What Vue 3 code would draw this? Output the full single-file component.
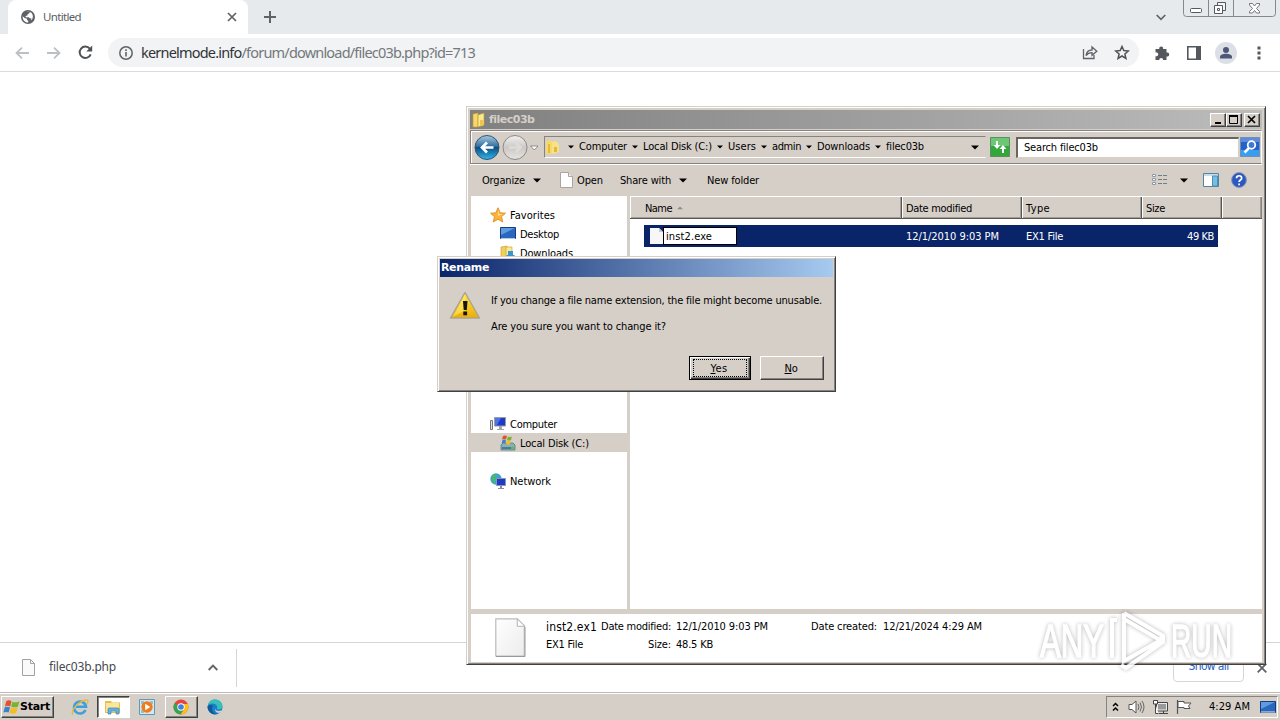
<template>
  <div class="screen">
    <!-- browser -->
    <div class="browser">
      <div class="tabstrip">
        <div class="tab">
          <svg class="globe" width="14" height="14" viewBox="0 0 14 14">
            <circle cx="7" cy="7" r="7" fill="#5f6368" />
            <path d="M1.6 6.2 4 8.2l1.8.4.4 1.6 1 .4v1.9C4 12.600 1.500 10 1.600 6.200zM6 2h2.800l-.6 1.500L6.700 4l-.2 1.500-2 .5.3 1.200h3l1 1 1.700.3L9.800 10.600C12.800 8.500 12.500 4.200 9.600 2.300 8.400 1.600 7 1.500 6 2z" fill="#fff" />
          </svg>
          <span v-fit="38" class="tab-title">Untitled</span>
          <svg class="tab-x" width="10" height="10" viewBox="0 0 10 10"><path d="M1 1l8 8M9 1L1 9" stroke="#5f6368" stroke-width="1.700" /></svg>
        </div>
        <svg class="tab-plus" width="12" height="12" viewBox="0 0 12 12"><path d="M6 0v12M0 6h12" stroke="#5f6368" stroke-width="2" /></svg>
        <svg class="tab-search" width="10" height="7" viewBox="0 0 10 7"><path d="M.7 1L5 5.400 9.300 1" fill="none" stroke="#5f6368" stroke-width="1.700" /></svg>
        <svg class="frame-buttons" width="94" height="17" viewBox="0 0 94 17">
          <path d="M.5 0v13.500q0 3 3 3h86q3 0 3-3V0M25.500 0v16.500M50.500 0v16.500" fill="none" stroke="#85888c" />
          <rect x="7.500" y="8.500" width="11" height="4" rx="1" fill="#fff" stroke="#55595f" />
          <path d="M34.500 2.500h8v8h-8z" fill="#f4f5f6" stroke="#55595f" />
          <path d="M31.500 5.500h8v8h-8z" fill="#fff" stroke="#55595f" /><path d="M34.500 8.500h2v2h-2z" fill="none" stroke="#55595f" />
          <path d="M66.500 3.500h3l2 2.500 2-2.500h3v1.500l-3 3.500 3 3v1.500h-3l-2-2.500-2 2.500h-3v-1.500l3-3-3-3.500z" fill="#fff" stroke="#66696e" stroke-width=".9" />
        </svg>
      </div>

      <div class="toolbar">
        <svg class="nav-back" width="14" height="12" viewBox="0 0 14 12"><path d="M14 6H1.500M7 .7L1.500 6 7 11.300" fill="none" stroke="#bdc0c3" stroke-width="1.800" /></svg>
        <svg class="nav-fwd" width="14" height="12" viewBox="0 0 14 12"><path d="M0 6h12.500M7 .7L12.500 6 7 11.300" fill="none" stroke="#bdc0c3" stroke-width="1.800" /></svg>
        <svg class="nav-reload" width="15" height="15" viewBox="0 0 15 15"><path d="M12.700 9.300A5.700 5.700 0 1 1 11.800 3.700L13 5" fill="none" stroke="#4f5357" stroke-width="2" /><path d="M14.200.5v6H8.300z" fill="#4f5357" /></svg>
        <div class="omnibox">
          <svg width="14" height="14" viewBox="0 0 14 14"><circle cx="7" cy="7" r="6.200" fill="none" stroke="#5f6368" stroke-width="1.500" /><path d="M7 6v4.500M7 3.300V5" stroke="#5f6368" stroke-width="1.600" /></svg>
          <span v-fit="334" class="url"><b>kernelmode.info</b>/forum/download/filec03b.php?id=713</span>
          <svg class="share" width="16" height="15" viewBox="0 0 16 15"><path d="M1.500 4v9.500H12V10M4 10.500C4.500 7 6.500 5 10 5V2l4.800 4.200L10 10.300V7.600C7.500 7.600 5.500 8.500 4 10.500z" fill="none" stroke="#5f6368" stroke-width="1.300" /></svg>
          <svg width="16" height="15" viewBox="0 0 16 15"><path d="M8 1.500l1.800 4.100 4.500.4-3.400 3 1 4.400L8 11l-3.900 2.400 1-4.400-3.400-3 4.500-.4z" fill="none" stroke="#4f5357" stroke-width="1.500" /></svg>
        </div>
        <svg class="puzzle" width="16" height="16" viewBox="0 0 16 16"><path d="M1.500 4h3.800a2 2 0 1 1 3.800 0H12.500v3.500a2.100 2.100 0 1 1 0 4V15H9.200a2 2 0 1 0-4 0H1.500v-3.800a2 2 0 1 0 0-3.700z" fill="#54585c" /></svg>
        <svg class="panel" width="14" height="14" viewBox="0 0 14 14"><path d="M.8.800h12.400v12.400H.800z" fill="#fff" stroke="#54585c" stroke-width="1.600" /><path d="M9 0h5v14H9z" fill="#54585c" /></svg>
        <svg class="avatar" width="22" height="22" viewBox="0 0 22 22"><circle cx="11" cy="11" r="11" fill="#dcdfe5" /><circle cx="11" cy="8" r="3" fill="#4d5878" /><path d="M5 16.500V15c0-2 3-3.200 6-3.200s6 1.200 6 3.200v1.500z" fill="#4d5878" /></svg>
        <svg class="dots" width="4" height="14" viewBox="0 0 4 14"><path d="M.5.500h3v3h-3zM.5 5.500h3v3h-3zM.5 10.500h3v3h-3z" fill="#54585c" /></svg>
      </div>

      <div class="page"></div>

      <div class="shelf">
        <svg class="shelf-icon" width="13" height="17" viewBox="0 0 13 17"><path d="M.5.500h8l4 4v12H.500z" fill="#fafafa" stroke="#a0a2a5" /><path d="M8.500.5v4h4" fill="none" stroke="#a0a2a5" /></svg>
        <span v-fit="67" class="shelf-name">filec03b.php</span>
        <svg class="shelf-caret" width="10" height="7" viewBox="0 0 10 7"><path d="M.7 6L5 1.600 9.300 6" fill="none" stroke="#5f6368" stroke-width="1.800" /></svg>
        <div class="shelf-sep"></div>
        <div class="show-all"><span v-fit="40">Show all</span></div>
        <svg class="shelf-x" width="10" height="10" viewBox="0 0 10 10"><path d="M.7.7l8.600 8.600M9.300.7L.7 9.300" stroke="#5f6368" stroke-width="1.800" /></svg>
      </div>
    </div>

    <!-- taskbar -->
    <div class="taskbar">
      <div class="start">
        <svg width="17" height="17" viewBox="0 0 16 16">
          <path d="M3 2q2.500-1.500 5 0L6.800 7Q4.300 5.800 1.800 7z" fill="#e5502a" />
          <path d="M8.800 2.500q2.700 1.500 6.700-.5L14 7.200Q11 8.500 7.700 7.200z" fill="#76b531" />
          <path d="M1.600 7.800Q4 6.600 6.600 7.800l-1.200 5q-2.500-1.300-5 0z" fill="#3a82cc" />
          <path d="M7.500 8.100q3 1.300 6.300 0l-1.400 5q-2.800 1.300-6.200 0z" fill="#f5bd22" />
        </svg>
        <span v-fit="30">Start</span>
      </div>
      <div class="task ie">
        <svg width="18" height="18" viewBox="0 0 18 18">
          <path d="M14.500 12A6 6 0 1 1 15 8.800H5" fill="none" stroke="#3ea0db" stroke-width="2.600" />
          <path d="M2 16.500C-1 13 7 4 14.500 2q4-.5 1.500 4" fill="none" stroke="#e7b93a" stroke-width="1.300" />
        </svg>
      </div>
      <div class="task pressed">
        <svg width="18" height="18" viewBox="0 0 18 18">
          <path d="M1 3h6l1 1.500h8V15H1z" fill="#e8bd4a" /><path d="M2 5h13v9H2z" fill="#fae79a" />
          <path d="M4 16v-5q0-1 1-1h9q1 0 1 1v5h-3v-3H7v3z" fill="#66b2dc" stroke="#3d88b8" stroke-width=".7" />
        </svg>
      </div>
      <div class="task">
        <svg width="16" height="16" viewBox="0 0 16 16"><path d="M.5.500h15v15H.500z" fill="#d5e7f1" stroke="#5b9abd" /><path d="M2 2h3v3H2zM2 11h3v3H2zM11 2h3v3h-3z" fill="#93bfd7" /><circle cx="8" cy="8" r="5.700" fill="#ee7c1b" /><path d="M6.200 4.800v6.400L11.300 8z" fill="#fff" /></svg>
      </div>
      <div class="task raised">
        <svg width="16" height="16" viewBox="0 0 16 16">
          <circle cx="8" cy="8" r="7.500" fill="#e8453c" />
          <path d="M1.500 4.200A7.500 7.500 0 0 0 7.500 15.500L11 10z" fill="#35a552" />
          <path d="M7.500 15.500A7.500 7.500 0 0 0 14.800 5H8l3.300 5z" fill="#fbc116" />
          <circle cx="8" cy="8" r="3.700" fill="#fff" /><circle cx="8" cy="8" r="2.800" fill="#417fe8" />
        </svg>
      </div>
      <div class="task edge">
        <svg width="16" height="16" viewBox="0 0 16 16">
          <circle cx="8" cy="8" r="7.500" fill="#1681c9" />
          <path d="M.8 6.500C2 2 5 .5 8 .5c4.500 0 7.500 3 7.500 6.500 0 2.500-2 3.500-4 3.500-1.500 0-2-.8-1.300-1.500C11 7.500 9 4.500 5.500 4.500 3.500 4.500 1.800 5.300.8 6.500z" fill="#37bfba" />
          <path d="M8.300 8.500c-1 2.500 2 4.200 5.700 3l1.500.5-2 1.500C10 15 7 12 8.300 8.500z" fill="#d5cfc8" />
          <path d="M6 7c-2.500 3 0 7.500 4 8-5 1.500-9.500-3-9.400-7.500C2 5.500 5 5.500 6 7z" fill="#14589c" />
        </svg>
      </div>
      <div class="tray">
        <svg class="tray-chev" width="7" height="10" viewBox="0 0 7 10"><path d="M1 4l2.500-2.500L6 4M1 8.500L3.500 6 6 8.500" fill="none" stroke="#000" stroke-width="1.500" /></svg>
        <svg width="17" height="16" viewBox="0 0 17 16"><path d="M1 5.500h3L8 2v12L4 10.500H1z" fill="#fff" stroke="#555" /><path d="M10 5q2 3 0 6M12 3.500q3 4.500 0 9M14 2q4 6 0 12" fill="none" stroke="#666" /></svg>
        <svg width="17" height="16" viewBox="0 0 17 16"><path d="M4.500 3.500h11v8.500h-11z" fill="#eee" stroke="#444" /><path d="M6 5h8v5.500H6z" fill="#999" /><path d="M7 14.500h9M11.500 12v2" stroke="#444" /><path d="M1.500 1.500h4v3.500h-4zM3.500 5v9.500h3" fill="#fff" stroke="#444" /></svg>
        <svg width="17" height="16" viewBox="0 0 17 16"><path d="M1.500 1v14" stroke="#555" stroke-width="1.200" /><path d="M2 2.500h6v1.500h7l-2.500 3 1.500 2.500H8V8.500H2z" fill="#fff" stroke="#555" /></svg>
        <span v-fit="41">4:29 AM</span>
        <svg class="show-desktop" width="16" height="13" viewBox="0 0 16 13"><path d="M.5.500h15v11H.500z" fill="#2a67bd" stroke="#173e7c" /><path d="M1 1h14L1 8z" fill="#5f9be0" /><path d="M1 11h14" stroke="#dfe9f5" /></svg>
      </div>
    </div>

    <!-- explorer window -->
    <div class="explorer">
      <div class="titlebar">
        <svg width="14" height="16" viewBox="0 0 14 16"><path d="M1 2l5-1v14H1z" fill="#f5d96b" stroke="#c49b2c" stroke-width=".7" /><path d="M6 3l6-2v12l-6 2z" fill="#fae994" stroke="#c49b2c" stroke-width=".7" /><path d="M8 8h3v6H8z" fill="#eec64a" /></svg>
        <span v-fit="45" class="title">filec03b</span>
        <div class="win-btns">
          <i><svg width="12" height="10" viewBox="0 0 12 10"><path d="M3 8h6" stroke="#000" stroke-width="2" /></svg></i>
          <i><svg width="12" height="10" viewBox="0 0 12 10"><path d="M1.500 1v7.500h8V1" fill="none" stroke="#000" /><path d="M1 1h9" stroke="#000" stroke-width="2" /></svg></i>
          <i class="gap"><svg width="12" height="10" viewBox="0 0 12 10"><path d="M2 1l7 7M9 1L2 8" stroke="#000" stroke-width="1.700" /></svg></i>
        </div>
      </div>

      <div class="address-row">
        <svg class="round-btns" width="68" height="28" viewBox="0 0 68 28">
          <defs>
            <linearGradient id="back" x2="0" y2="1"><stop offset="0" stop-color="#a8cbe2" /><stop offset=".45" stop-color="#33709f" /><stop offset=".5" stop-color="#0b4d85" /><stop offset="1" stop-color="#32b8ee" /></linearGradient>
            <linearGradient id="fwd" x2="0" y2="1"><stop offset="0" stop-color="#f2f1ef" /><stop offset=".5" stop-color="#cbc8c5" /><stop offset="1" stop-color="#e6e4e2" /></linearGradient>
          </defs>
          <circle cx="14" cy="14.500" r="12" fill="url(#back)" stroke="#35546b" />
          <path d="M20.500 14.500H9M14 9.500l-5 5 5 5" fill="none" stroke="#fff" stroke-width="2.700" />
          <circle cx="42" cy="14.500" r="12" fill="url(#fwd)" stroke="#8b8885" />
          <path d="M36 14.500h11M43 10l4.500 4.500L43 19" fill="none" stroke="#dedbd9" stroke-width="2.500" />
          <path d="M57.500 13h7.500l-3.700 4z" fill="#fff" stroke="#777" stroke-width=".8" />
        </svg>
        <div class="address">
          <svg width="15" height="16" viewBox="0 0 15 16"><path d="M1 2l6-1v14H1z" fill="#f5d96b" /><path d="M7 3l4-1 3 3v8l-7 2z" fill="#f8e187" /><path d="M3 5h2v9H3zM9 8h3v5H9z" fill="#e4b93d" /></svg>
          <div class="crumbs">
            <template v-for="c in crumbs" :key="c.text">
              <svg class="crumb-arrow" width="6" height="4" viewBox="0 0 6 4"><path d="M0 .5h6L3 3.500z" /></svg>
              <span v-fit="c.w">{{ c.text }}</span>
            </template>
          </div>
          <svg class="drop" width="8" height="5" viewBox="0 0 8 5"><path d="M0 .5h8L4 4.500z" /></svg>
        </div>
        <svg class="refresh" width="20" height="20" viewBox="0 0 20 20">
          <path d="M.5.500h19v19H.500z" fill="#32a83b" stroke="#5d8d61" /><path d="M1 1h18v8H1z" fill="#6dc673" />
          <path d="M6 4h2v4h2.500L7 12 3.500 8H6zM12 16v-4H9.500L13 8l3.500 4H14v4z" fill="#fff" />
        </svg>
        <div class="search"><span v-fit="74">Search filec03b</span></div>
        <svg class="search-btn" width="20" height="20" viewBox="0 0 20 20">
          <path d="M.5.500h19v19H.500z" fill="#2362c6" stroke="#6e8fb9" /><path d="M1 13h18v6H1z" fill="#3a9df0" /><path d="M1 1h18v4H1z" fill="#5e8bdc" />
          <circle cx="11.500" cy="8" r="3.800" fill="#3e79d8" stroke="#fff" stroke-width="1.800" /><path d="M9 11l-4.500 4.500" stroke="#fff" stroke-width="2.500" />
        </svg>
      </div>

      <div class="commands">
        <span v-fit="43">Organize</span>
        <svg class="c-arrow" width="8" height="5" viewBox="0 0 8 5"><path d="M0 .5h8L4 4.500z" /></svg>
        <svg class="c-file" width="13" height="16" viewBox="0 0 13 16"><path d="M.5.500h8l4 4v11H.500z" fill="#fff" stroke="#aaa69f" /><path d="M8.500.5v4h4" fill="#eee" stroke="#aaa69f" /></svg>
        <span v-fit="26">Open</span>
        <span v-fit="51" class="c-share">Share with</span>
        <svg class="c-arrow" width="8" height="5" viewBox="0 0 8 5"><path d="M0 .5h8L4 4.500z" /></svg>
        <span v-fit="52" class="c-new">New folder</span>
        <svg class="c-view" width="15" height="12" viewBox="0 0 15 12"><path d="M.5.500h3v2h-3zM.5 4.500h3v2h-3zM.5 8.500h3v2h-3z" fill="#fff" stroke="#8e97a5" /><path d="M6 1.500h4M11 1.500h4M6 5.500h4M11 5.500h4M6 9.500h4M11 9.500h4" stroke="#777b82" /></svg>
        <svg class="c-view-arrow" width="8" height="5" viewBox="0 0 8 5"><path d="M0 .5h8L4 4.500z" /></svg>
        <svg class="c-preview" width="16" height="14" viewBox="0 0 16 14"><path d="M.5.500h15v13H.500z" fill="#fff" stroke="#54849f" /><path d="M1 1h14v2H1z" fill="#c7dce9" /><path d="M9.500 3h5v10h-5z" fill="#76bfe2" stroke="#4d8fb0" /></svg>
        <svg class="c-help" width="16" height="16" viewBox="0 0 16 16"><circle cx="8" cy="8" r="7.400" fill="#2c58c0" stroke="#8795b5" /><path d="M5.500 6.200c0-3.300 5.200-3.300 5.200 0 0 1.800-2.600 1.800-2.600 3.800M8.100 11.500v1.800" fill="none" stroke="#fff" stroke-width="1.700" /></svg>
      </div>

      <div class="body">
        <div class="nav">
          <div class="nav-row root">
            <svg width="16" height="16" viewBox="0 0 16 16"><path d="M8 .8l2.200 5 5.300.4-4 3.500 1.300 5.300L8 12.200 3.200 15l1.300-5.300-4-3.500 5.300-.4z" fill="#fbb33a" stroke="#d98420" stroke-width=".8" /><path d="M8 3l1.300 4H13L8 9z" fill="#fedf8f" /></svg>
            <span v-fit="45">Favorites</span>
          </div>
          <div class="nav-row">
            <svg width="16" height="13" viewBox="0 0 16 13"><path d="M.5.500h15v11H.500z" fill="#2a67bd" stroke="#173e7c" /><path d="M1 1h14L1 8z" fill="#5f9be0" /><path d="M1 11.500h14" stroke="#b9cce6" /></svg>
            <span v-fit="39">Desktop</span>
          </div>
          <div class="nav-row">
            <svg width="16" height="16" viewBox="0 0 16 16"><path d="M1 2l6-1v14H1z" fill="#f0cf5e" stroke="#c49b2c" stroke-width=".6" /><path d="M6 2h6v12l-6 1z" fill="#fae994" stroke="#c49b2c" stroke-width=".6" /><path d="M8 6h5v4h2l-4.500 5L6 10h2z" fill="#3795d0" /></svg>
            <span v-fit="53">Downloads</span>
          </div>
          <div class="nav-gap"></div>
          <div class="nav-row"><svg width="16" height="15" viewBox="0 0 16 15"><path d="M2 1h12v13H2z" fill="#444" /></svg></div>
          <div class="nav-blank"></div>
          <div class="nav-row root">
            <svg width="16" height="16" viewBox="0 0 16 16"><path d="M.5 4.500h2v9h-2z" fill="#ddd" stroke="#777" /><path d="M4.500 1.500h11v8.500h-11z" fill="#1c3cc8" stroke="#9a9da6" /><path d="M5 2h6l-4 7H5z" fill="#4d74e8" /><path d="M9 10h3v3H9zM7 13h7v1H7z" fill="#a4a8b0" /></svg>
            <span v-fit="47">Computer</span>
          </div>
          <div class="nav-row selected">
            <svg width="16" height="16" viewBox="0 0 16 16"><path d="M1 10l2-2h10l2 2v5H1z" fill="#8eaeb5" stroke="#587680" stroke-width=".8" /><path d="M2 12h9v2H2z" fill="#3f7e98" /><path d="M11 12h3v2h-3z" fill="#54c342" /><path d="M3 1q2-1 4 0l-1 3.500q-2-1-4 0z" fill="#e5502a" /><path d="M8 1.500q2 1 4 0L11 5Q9 6 7 5z" fill="#76b531" /><path d="M2.500 5q2-1 3.500 0l-.8 3.500q-2-1-3.500 0z" fill="#3a82cc" /><path d="M7 5.500q2 1 4 0L10 9q-2 1-4 0z" fill="#f5bd22" /></svg>
            <span v-fit="69">Local Disk (C:)</span>
          </div>
          <div class="nav-blank"></div>
          <div class="nav-row root">
            <svg width="16" height="16" viewBox="0 0 16 16"><circle cx="6" cy="6" r="5.700" fill="#3fa1cf" /><path d="M2 3q3-3 6 0L5 5l2 3-3 2q-3-3-2-7z" fill="#47b96c" /><path d="M6.500 5.500h9v7h-9z" fill="#1c3cc8" stroke="#8c93b8" /><path d="M10 13h2v2h-2zM8 15h6v1H8z" fill="#8a8e98" /></svg>
            <span v-fit="41">Network</span>
          </div>
        </div>

        <div class="list">
          <div class="heads">
            <div class="head name"><span v-fit="27">Name</span><svg width="6" height="4" viewBox="0 0 6 4"><path d="M3 .5l2.800 2.800H.2z" fill="#8c8984" /></svg></div>
            <div class="head"><span v-fit="66">Date modified</span></div>
            <div class="head"><span v-fit="24">Type</span></div>
            <div class="head size"><span v-fit="19">Size</span></div>
            <div class="head rest"></div>
          </div>
          <div class="file-row">
            <div class="file-name">
              <svg width="13" height="16" viewBox="0 0 13 16"><path d="M0 0h9l4 4v12H0z" fill="#f7f7f7" /><path d="M9 0v4h4z" fill="#c5c9d2" /></svg>
              <div class="edit"><span v-fit="46">inst2.exe</span></div>
            </div>
            <div class="file-date"><span v-fit="93">12/1/2010 9:03 PM</span></div>
            <div class="file-type"><span v-fit="37">EX1 File</span></div>
            <div class="file-size"><span v-fit="27">49 KB</span></div>
          </div>
        </div>
      </div>

      <div class="details">
        <svg width="32" height="40" viewBox="0 0 32 40">
          <defs><linearGradient id="paper" x2="1" y2="1"><stop offset="0" stop-color="#fff" /><stop offset="1" stop-color="#ececec" /></linearGradient></defs>
          <path d="M.8.800h21.500l7 7V38H.800z" fill="url(#paper)" stroke="#bcbcbc" stroke-width="1.200" /><path d="M22.300.8v7.500h7.500z" fill="#fff" stroke="#b4b4b4" /><path d="M30 9v29.500H1" fill="none" stroke="#999" />
        </svg>
        <div class="d-main">
          <span v-fit="51" class="d-name">inst2.ex1</span>
          <span v-fit="37">EX1 File</span>
        </div>
        <div class="d-labels"><span v-fit="70">Date modified:</span><span v-fit="23">Size:</span></div>
        <div class="d-values"><span v-fit="92">12/1/2010 9:03 PM</span><span v-fit="37">48.5 KB</span></div>
        <div class="d-created"><span v-fit="66">Date created:</span><span v-fit="99">12/21/2024 4:29 AM</span></div>
      </div>
    </div>

    <!-- rename dialog -->
    <div class="dialog">
      <div class="dialog-title"><span v-fit="48">Rename</span></div>
      <div class="dialog-body">
        <svg class="warn" width="32" height="29" viewBox="0 0 32 29">
          <defs><linearGradient id="warn" x2="0" y2="1"><stop offset="0" stop-color="#ffe94d" /><stop offset="1" stop-color="#f0ac00" /></linearGradient></defs>
          <path d="M16 1.500L30.500 27h-29z" fill="url(#warn)" stroke="#a9a595" stroke-width="1.500" stroke-linejoin="round" />
          <path d="M16 4L4 25.500l12-6z" fill="#fff07a" opacity=".55" />
          <path d="M14 10h4.500l-.7 9h-3.100z" fill="#151515" /><rect x="14.300" y="20.500" width="3.800" height="3.800" fill="#151515" />
        </svg>
        <div class="message">
          <span v-fit="331">If you change a file name extension, the file might become unusable.</span>
          <span v-fit="175">Are you sure you want to change it?</span>
        </div>
      </div>
      <div class="dialog-buttons">
        <div class="btn default"><div class="focus"><span v-fit="17"><u>Y</u>es</span></div></div>
        <div class="btn"><span v-fit="13"><u>N</u>o</span></div>
      </div>
    </div>

    <!-- watermark -->
    <svg class="watermark" width="204" height="68" viewBox="0 0 204 68">
      <g class="wm-text">
        <text x="6" y="49" textLength="64" lengthAdjust="spacingAndGlyphs">ANY</text>
        <text x="137" y="49" textLength="61" lengthAdjust="spacingAndGlyphs">RUN</text>
      </g>
      <path class="wm-play" d="M83 12h-5v38M90 13v40l37-21M90 5v6l36 21 3-6M90 5l39 23v6L92 60l-5-3" />
    </svg>
  </div>
</template>

<script setup>
const crumbs = [
  { text: 'Computer', w: 48 },
  { text: 'Local Disk (C:)', w: 69 },
  { text: 'Users', w: 28 },
  { text: 'admin', w: 29 },
  { text: 'Downloads', w: 53 },
  { text: 'filec03b', w: 38 },
]

// spreads the letters so a label takes exactly the given width
const vFit = {
  mounted(el, { value }) {
    const n = el.textContent.length
    const w = el.getBoundingClientRect().width
    el.style.letterSpacing = (value - w) / n + 'px'
  },
}
</script>

<style>
body {
  overflow: hidden;
}
</style>

<style scoped>
.screen {
  position: relative;
  width: 1280px;
  height: 720px;
  overflow: hidden;
  background: #fff;
  color: #000;
  font-family: 'DejaVu Sans Condensed', 'DejaVu Sans', sans-serif;
  font-stretch: condensed;
  font-size: 11px;
  line-height: 14px;
  display: flex;
  flex-direction: column;
}
.screen * { box-sizing: border-box; }
span { white-space: pre; flex: none; display: inline-block; }
svg { flex: none; display: block; }

/* browser */
.browser { height: 692px; display: flex; flex-direction: column; }
.tabstrip { height: 34px; background: #e7eaed; display: flex; align-items: flex-start; }
.tab {
  width: 240px; height: 34px;
  margin-left: 8px;
  padding: 0 11px 0 13px;
  background: #fff;
  border-radius: 8px 8px 0 0;
  display: flex; align-items: center;
}
.tab-title { margin-left: 8px; font-size: 11.5px; color: #5b5f63; font-family: 'Noto Sans', sans-serif; }
.tab-x { margin-left: auto; }
.tab-plus { margin: 11px 0 0 16px; }
.tab-search { margin: 14px 0 0 auto; }
.frame-buttons { margin: 0 3px 0 17px; }

.toolbar { height: 38px; display: flex; align-items: center; border-bottom: 1px solid #d9dbde; }
.nav-back { margin-left: 15px; }
.nav-fwd { margin-left: 18px; }
.nav-reload { margin-left: 17px; }
.omnibox {
  width: 1031px; height: 29px;
  margin-left: 15px;
  padding: 0 9px 0 11px;
  border-radius: 15px;
  background: #f1f3f4;
  display: flex; align-items: center;
}
.url { margin-left: 8px; padding-bottom: 2px; font: 14.500px 'Noto Sans', sans-serif; color: #74787c; }
.url b { font-weight: 400; color: #303337; }
.share { margin: 0 16px 0 auto; }
.puzzle { margin-left: 15px; }
.panel { margin-left: 17px; }
.avatar { margin-left: 14px; }
.dots { margin-left: 20px; }

.page { flex: 1; }
.shelf { height: 50px; border-top: 1px solid #d4d6d9; display: flex; align-items: center; }
.shelf-icon { margin-left: 22px; }
.shelf-name { margin-left: 14px; padding-bottom: 2px; font: 12px 'Noto Sans', sans-serif; color: #46494d; }
.shelf-caret { margin-left: 92px; }
.shelf-sep { width: 1px; height: 38px; margin-left: 18px; background: #d4d6d9; }
.show-all {
  width: 71px; height: 29px;
  margin-left: auto;
  padding-bottom: 3px;
  border: 1px solid #d4d6d9; border-radius: 4px;
  display: flex; align-items: center; justify-content: center;
  font-size: 12px; color: #2a62c8;
}
.shelf-x { margin: 0 13px; }

/* taskbar */
.taskbar {
  height: 28px;
  padding: 1px 2px 0 1px;
  background: #d5cfc8;
  border-top: 1px solid #bdb9b3;
  box-shadow: inset 0 1px #fff;
  display: flex; align-items: center;
}
.start {
  width: 53px; height: 22px;
  padding-left: 1px;
  border: 1px solid; border-color: #fff #404040 #404040 #fff;
  box-shadow: inset -1px -1px #868280;
  display: flex; align-items: center;
  font-family: 'DejaVu Sans', sans-serif;
  font-stretch: normal;
  font-weight: 700;
}
.task { width: 33px; height: 22px; margin-right: 1px; display: flex; align-items: center; justify-content: center; }
.task.ie { margin-left: 9px; }
.pressed { padding-right: 2px; background: #fff; border: 1px solid; border-color: #404040 #fff #fff #404040; box-shadow: inset 1px 1px #868280; }
.task:nth-child(n + 4) { padding-right: 1px; }
.raised { border: 1px solid; border-color: #fff #404040 #404040 #fff; box-shadow: inset -1px -1px #868280; }
.tray {
  width: 172px; height: 22px;
  margin-left: auto;
  padding-left: 5px;
  border: 1px solid; border-color: #868280 #fff #fff #868280;
  display: flex; align-items: center; gap: 7px;
}
.tray-chev { margin-right: 2px; }
.tray span { margin-left: 9px; }
.show-desktop { margin-left: 3px; }

/* explorer */
.explorer {
  position: absolute;
  left: 466px; top: 106px;
  width: 800px; height: 559px;
  padding: 2px 2px 1px 2px;
  background: #d5cfc8;
  border: 1px solid; border-color: #d5cfc8 #404040 #404040 #d5cfc8;
  box-shadow: inset 1px 1px #fff, inset -1px -1px #868280;
  display: flex; flex-direction: column;
}
.titlebar {
  height: 19px;
  margin: 1px 1px 0 1px;
  padding: 0 2px;
  background: linear-gradient(90deg, #808080, #bcbcbc);
  display: flex; align-items: center;
}
.title, .dialog-title { font-family: 'DejaVu Sans', sans-serif; font-stretch: normal; font-weight: 700; }
.title { margin-left: 3px; color: #d5cfc8; }
.win-btns { margin-left: auto; display: flex; }
.win-btns i {
  width: 16px; height: 14px;
  padding: 1px;
  background: #d5cfc8;
  border: 1px solid; border-color: #fff #404040 #404040 #fff;
  box-shadow: inset -1px -1px #868280;
}
.win-btns .gap { margin-left: 2px; }
.address-row {
  height: 34px;
  margin: 1px 1px 0 1px;
  padding: 0 1px 0 2px;
  border: 1px solid; border-color: #868280 #fff #868280 #868280;
  box-shadow: inset 1px 1px #fff, 0 1px #fff;
  display: flex; align-items: center;
}
.address {
  width: 442px; height: 22px;
  margin-left: 3px;
  padding: 0 6px 0 0;
  border: 1px solid; border-color: #868280 #d5cfc8 #fff #868280;
  display: flex; align-items: center;
}
.crumbs { margin-left: 3px; display: flex; align-items: center; }
.crumb-arrow { margin: 0 5px; }
.drop { margin-left: auto; }
.refresh { margin-left: 4px; }
.search {
  flex: 1; height: 21px;
  margin-left: 6px;
  padding-left: 6px;
  background: #fff;
  border: 2px solid; border-color: #68645f #d5cfc8 #d5cfc8 #68645f;
  border-right-width: 1px; border-bottom-width: 1px;
  display: flex; align-items: center;
}
.search-btn { margin-left: 1px; }

.commands { height: 32px; padding-left: 13px; display: flex; align-items: center; }
.commands span, .body span, .details span, .dialog-body span, .btn span { padding-top: 2px; }
.c-arrow { margin-left: 8px; }
.c-file { margin: 0 4px 0 19px; }
.c-share { margin-left: 17px; }
.c-new { margin-left: 20px; }
.c-view { margin-left: auto; }
.c-view-arrow { margin-left: 13px; }
.c-preview { margin-left: 15px; }
.c-help { margin: 0 16px 0 12px; }

.body { height: 413px; margin: 0 1px 0 2px; display: flex; }
.nav { width: 156px; padding-top: 9px; background: #fff; }
.nav-row { height: 19px; padding-left: 29px; display: flex; align-items: center; gap: 4px; }
.nav-row.root { padding-left: 19px; }
.nav-row.selected { background: #d5cfc8; }
.nav-gap { height: 114px; }
.nav-blank { height: 19px; }
.list { flex: 1; margin-left: 3px; background: #fff; }
.heads { height: 23px; display: flex; background: #d5cfc8; border-top: 1px solid #fff; border-bottom: 1px solid #59554f; }
.head {
  width: 120px;
  padding-left: 4px;
  border-right: 1px solid #59554f;
  box-shadow: inset 1px 0 #fff, inset -1px -1px #a19d97;
  display: flex; align-items: center;
}
.head.name { width: 272px; padding-left: 15px; gap: 5px; }
.head.size { width: 80px; }
.head.rest { width: 40px; border-right-color: #868280; }
.file-row {
  width: 574px; height: 22px;
  margin: 6px 0 0 14px;
  background: #0a246a;
  color: #fff;
  display: flex; align-items: center;
}
.file-name { width: 262px; padding-left: 6px; display: flex; align-items: center; }
.edit { width: 74px; height: 18px; padding-left: 2px; background: #fff; border: 1px solid #000; color: #000; display: flex; align-items: center; }
.file-date { width: 120px; }
.file-type { width: 161px; }

.details {
  flex: 1;
  margin: 0 1px 1px 2px;
  padding: 4px 0 0 24px;
  background: #fff;
  border-top: 5px solid #d5cfc8;
  display: flex; align-items: flex-start;
}
.details > div { display: flex; flex-direction: column; align-items: flex-start; gap: 2px; }
.d-main { margin-left: 19px; width: 55px; }
.d-name { font-size: 12px; }
.details .d-labels { width: 70px; align-items: flex-end; }
.details .d-values { margin-left: 5px; }
.details .d-created { margin-left: 43px; flex-direction: row; gap: 6px; }

/* dialog */
.dialog {
  position: absolute;
  left: 437px; top: 256px;
  width: 399px; height: 136px;
  padding: 2px;
  background: #d5cfc8;
  border: 1px solid; border-color: #d5cfc8 #404040 #404040 #d5cfc8;
  box-shadow: inset 1px 1px #fff, inset -1px -1px #868280;
}
.dialog-title {
  height: 18px;
  padding-left: 1px;
  background: linear-gradient(90deg, #0a246a, #a6caf0);
  color: #fff;
  display: flex; align-items: center;
}
.dialog-body { height: 79px; padding: 15px 0 0 9px; display: flex; align-items: flex-start; }
.message { margin-left: 10px; display: flex; flex-direction: column; align-items: flex-start; gap: 10px; }
.warn { margin-top: -1px; }
.dialog-buttons { padding-right: 9px; display: flex; justify-content: flex-end; gap: 9px; }
.btn {
  width: 64px; height: 24px;
  padding-right: 2px;
  border: 1px solid; border-color: #fff #404040 #404040 #fff;
  box-shadow: inset -1px -1px #868280;
  display: flex; align-items: center; justify-content: center;
}
.btn.default {
  width: 62px;
  padding-right: 0;
  border-color: #000;
  box-shadow: inset 1px 1px #fff, inset -1px -1px #404040, inset -2px -2px #868280;
}
.focus { width: 54px; height: 18px; padding-right: 2px; border: 1px dotted #000; display: flex; align-items: center; justify-content: center; }

.watermark {
  position: absolute;
  left: 1034px; top: 608px;
  filter: drop-shadow(0 0 2px rgba(0, 0, 0, .33));
  opacity: .85;
}
.wm-text {
  font: 47px 'Liberation Sans', sans-serif;
  fill: #fff;
  stroke: #fff;
  stroke-width: 1.5px;
}
.wm-play {
  fill: none;
  stroke: #fff;
  stroke-width: 4px;
}
</style>
